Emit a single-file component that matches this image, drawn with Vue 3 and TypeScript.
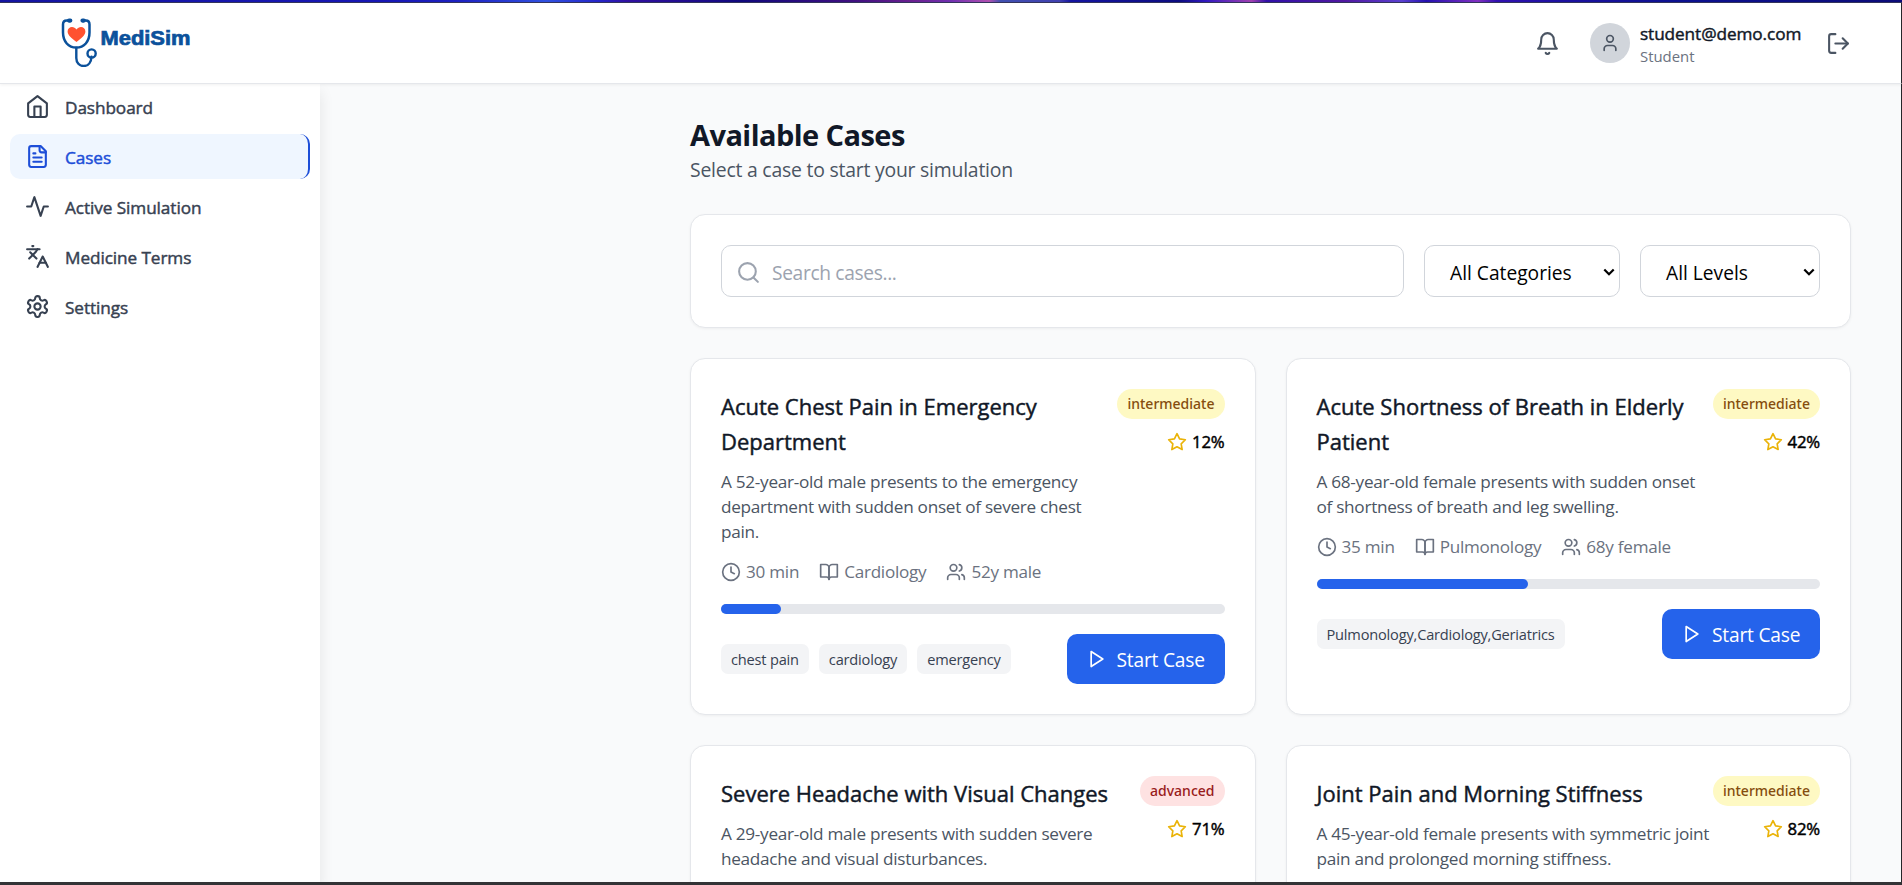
<script setup lang="ts">
type IconName =
  | 'home' | 'file' | 'activity' | 'languages' | 'settings' | 'bell' | 'user' | 'logout'
  | 'search' | 'star' | 'clock' | 'book' | 'users' | 'play'

interface NavItem { label: string; icon: IconName; active?: boolean }
interface CaseItem {
  title: string[]
  description: string[]
  level: 'intermediate' | 'advanced'
  score: number
  meta?: { icon: IconName; text: string }[]
  tags?: string[]
}

const icons: Record<IconName, string[]> = {
  home: ['m3 9 9-7 9 7v11a2 2 0 0 1-2 2H5a2 2 0 0 1-2-2z', 'M9 22V12h6v10'],
  file: ['M15 2H6a2 2 0 0 0-2 2v16a2 2 0 0 0 2 2h12a2 2 0 0 0 2-2V7Z', 'M14 2v4a2 2 0 0 0 2 2h4', 'M10 9H8', 'M16 13H8', 'M16 17H8'],
  activity: ['M22 12h-4l-3 9L9 3l-3 9H2'],
  languages: ['m5 8 6 6', 'm4 14 6-6 2-3', 'M2 5h12', 'M7 2h1', 'm22 22-5-10-5 10', 'M14 18h6'],
  settings: [
    'M12.22 2h-.44a2 2 0 0 0-2 2v.18a2 2 0 0 1-1 1.73l-.43.25a2 2 0 0 1-2 0l-.15-.08a2 2 0 0 0-2.73.73l-.22.38a2 2 0 0 0 .73 2.73l.15.1a2 2 0 0 1 1 1.72v.51a2 2 0 0 1-1 1.74l-.15.09a2 2 0 0 0-.73 2.73l.22.38a2 2 0 0 0 2.73.73l.15-.08a2 2 0 0 1 2 0l.43.25a2 2 0 0 1 1 1.73V20a2 2 0 0 0 2 2h.44a2 2 0 0 0 2-2v-.18a2 2 0 0 1 1-1.73l.43-.25a2 2 0 0 1 2 0l.15.08a2 2 0 0 0 2.73-.73l.22-.39a2 2 0 0 0-.73-2.73l-.15-.08a2 2 0 0 1-1-1.74v-.5a2 2 0 0 1 1-1.74l.15-.09a2 2 0 0 0 .73-2.73l-.22-.38a2 2 0 0 0-2.73-.73l-.15.08a2 2 0 0 1-2 0l-.43-.25a2 2 0 0 1-1-1.73V4a2 2 0 0 0-2-2z',
    'M15 12a3 3 0 1 1-6 0 3 3 0 0 1 6 0z',
  ],
  bell: ['M6 8a6 6 0 0 1 12 0c0 7 3 9 3 9H3s3-2 3-9', 'M10.3 21a1.94 1.94 0 0 0 3.4 0'],
  user: ['M19 21v-2a4 4 0 0 0-4-4H9a4 4 0 0 0-4 4v2', 'M16 7a4 4 0 1 1-8 0 4 4 0 0 1 8 0z'],
  logout: ['M9 21H5a2 2 0 0 1-2-2V5a2 2 0 0 1 2-2h4', 'm16 17 5-5-5-5', 'M21 12H9'],
  search: ['M19 11a8 8 0 1 1-16 0 8 8 0 0 1 16 0z', 'm21 21-4.3-4.3'],
  star: ['m12 2 3.09 6.26L22 9.27l-5 4.87 1.18 6.88L12 17.77l-6.18 3.25L7 14.14 2 9.27l6.91-1.01z'],
  clock: ['M22 12a10 10 0 1 1-20 0 10 10 0 0 1 20 0z', 'M12 6v6l4 2'],
  book: ['M2 3h6a4 4 0 0 1 4 4v14a3 3 0 0 0-3-3H2z', 'M22 3h-6a4 4 0 0 0-4 4v14a3 3 0 0 1 3-3h7z'],
  users: ['M16 21v-2a4 4 0 0 0-4-4H6a4 4 0 0 0-4 4v2', 'M13 7a4 4 0 1 1-8 0 4 4 0 0 1 8 0z', 'M22 21v-2a4 4 0 0 0-3-3.87', 'M16 3.13a4 4 0 0 1 0 7.75'],
  play: ['m5 3 14 9-14 9z'],
}

const nav: NavItem[] = [
  { label: 'Dashboard', icon: 'home' },
  { label: 'Cases', icon: 'file', active: true },
  { label: 'Active Simulation', icon: 'activity' },
  { label: 'Medicine Terms', icon: 'languages' },
  { label: 'Settings', icon: 'settings' },
]

const cases: CaseItem[] = [
  {
    title: ['Acute Chest Pain in Emergency', 'Department'],
    description: ['A 52-year-old male presents to the emergency', 'department with sudden onset of severe chest', 'pain.'],
    level: 'intermediate',
    score: 12,
    meta: [
      { icon: 'clock', text: '30 min' },
      { icon: 'book', text: 'Cardiology' },
      { icon: 'users', text: '52y male' },
    ],
    tags: ['chest pain', 'cardiology', 'emergency'],
  },
  {
    title: ['Acute Shortness of Breath in Elderly', 'Patient'],
    description: ['A 68-year-old female presents with sudden onset', 'of shortness of breath and leg swelling.'],
    level: 'intermediate',
    score: 42,
    meta: [
      { icon: 'clock', text: '35 min' },
      { icon: 'book', text: 'Pulmonology' },
      { icon: 'users', text: '68y female' },
    ],
    tags: ['Pulmonology,Cardiology,Geriatrics'],
  },
  {
    title: ['Severe Headache with Visual Changes'],
    description: ['A 29-year-old male presents with sudden severe', 'headache and visual disturbances.'],
    level: 'advanced',
    score: 71,
  },
  {
    title: ['Joint Pain and Morning Stiffness'],
    description: ['A 45-year-old female presents with symmetric joint', 'pain and prolonged morning stiffness.'],
    level: 'intermediate',
    score: 82,
  },
]
</script>

<template>
  <div class="screen">
    <div class="strip"></div>
    <header class="header">
      <svg class="logo" viewBox="0 0 162 50">
        <g fill="none" stroke="#0b519b" stroke-linecap="round" stroke-linejoin="round">
          <path d="M28.500 3.600h-1.800c-2.400 0-3.700 1.500-3.700 4v8c0 9 5.500 15 13.300 15s13.200-6 13.200-15v-8c0-2.500-1.300-4-3.700-4h-1.800" stroke-width="2.500" />
          <path d="M29 3.600h1.300M42.500 3.600h1.300" stroke-width="4.200" />
          <path d="M36.300 31v10c0 4.500 3 8 7.300 8 5 0 7.700-4.200 7.900-9.300" stroke-width="2.400" />
          <circle cx="51.600" cy="36.500" r="4.100" stroke-width="2.400" />
        </g>
        <path d="M36.500 25c-4.200-3.300-8.900-6.500-8.900-10.500 0-5.300 6.500-6 8.900-2 2.400-4 8.900-3.300 8.900 2 0 4-4.700 7.200-8.900 10.500z" fill="#ff5230" />
        <text x="60.500" y="28.300" textLength="90" lengthAdjust="spacingAndGlyphs">MediSim</text>
      </svg>
      <div class="account">
        <button class="icon-button">
          <svg class="icon" viewBox="0 0 24 24"><path v-for="d in icons.bell" :key="d" :d="d" /></svg>
        </button>
        <div class="profile">
          <div class="avatar">
            <svg class="icon small" viewBox="0 0 24 24"><path v-for="d in icons.user" :key="d" :d="d" /></svg>
          </div>
          <div class="who">
            <div class="email">student@demo.com</div>
            <div class="role">Student</div>
          </div>
        </div>
        <button class="icon-button">
          <svg class="icon" viewBox="0 0 24 24"><path v-for="d in icons.logout" :key="d" :d="d" /></svg>
        </button>
      </div>
    </header>

    <div class="body">
      <nav class="sidebar">
        <a v-for="item in nav" :key="item.label" class="nav-item" :class="{ active: item.active }">
          <svg class="icon" viewBox="0 0 24 24"><path v-for="d in icons[item.icon]" :key="d" :d="d" /></svg>
          <span>{{ item.label }}</span>
        </a>
      </nav>

      <main class="main">
        <h1>Available Cases</h1>
        <p class="subtitle">Select a case to start your simulation</p>

        <section class="panel filters">
          <div class="search">
            <svg class="icon" viewBox="0 0 24 24"><path v-for="d in icons.search" :key="d" :d="d" /></svg>
            <span>Search cases...</span>
          </div>
          <div class="select categories">
            <span>All Categories</span>
            <svg class="chevron" viewBox="0 0 12 8"><path d="m1.300 1.500 4.700 4.700 4.700-4.700" /></svg>
          </div>
          <div class="select levels">
            <span>All Levels</span>
            <svg class="chevron" viewBox="0 0 12 8"><path d="m1.300 1.500 4.700 4.700 4.700-4.700" /></svg>
          </div>
        </section>

        <section class="grid">
          <article v-for="c in cases" :key="c.title[0]" class="panel case">
            <div class="case-top">
              <div class="case-info">
                <h3><span v-for="line in c.title" :key="line">{{ line }}</span></h3>
                <p><span v-for="line in c.description" :key="line">{{ line }}</span></p>
                <div v-if="c.meta" class="meta">
                  <div v-for="m in c.meta" :key="m.text">
                    <svg class="icon small" viewBox="0 0 24 24"><path v-for="d in icons[m.icon]" :key="d" :d="d" /></svg>
                    <span>{{ m.text }}</span>
                  </div>
                </div>
              </div>
              <div class="case-side">
                <span class="badge" :class="c.level">{{ c.level }}</span>
                <div class="score">
                  <svg class="icon small star" viewBox="0 0 24 24"><path v-for="d in icons.star" :key="d" :d="d" /></svg>
                  <span>{{ c.score }}%</span>
                </div>
              </div>
            </div>
            <template v-if="c.tags">
              <div class="track"><div class="fill" :style="{ width: c.score + '%' }"></div></div>
              <div class="case-bottom">
                <div class="tags"><span v-for="t in c.tags" :key="t">{{ t }}</span></div>
                <button class="start">
                  <svg class="icon small" viewBox="0 0 24 24"><path v-for="d in icons.play" :key="d" :d="d" /></svg>
                  <span>Start Case</span>
                </button>
              </div>
            </template>
          </article>
        </section>
      </main>
    </div>
    <div class="bottom-edge"></div>
  </div>
</template>

<style>
body {
  margin: 0;
  overflow: hidden;
}
</style>

<style scoped>
.screen {
  width: 1902px;
  height: 885px;
  box-sizing: border-box;
  display: flex;
  flex-direction: column;
  overflow: hidden;
  background: #f9fafb;
  color: #111827;
  font-family: 'Segoe UI', 'Open Sans', 'Noto Sans', sans-serif;
}
.screen *,
.screen *::before {
  box-sizing: border-box;
}
.strip {
  flex: none;
  height: 3px;
  border-bottom: 1px solid #35355c;
  background: linear-gradient(90deg, #1414a0 0%, #1616b4 20%, #1c20c0 24%, #3050e0 28.700%, #2424c8 31.500%, #3010a0 33%, #10087c 39%, #401080 45%, #6a2090 48%, #7030b0 50%, #b050b0 52%, #4050b0 52.600%, #4040b0 55.700%, #1414a0 56.300%, #0c0c80 62%, #3018c0 63.400%, #a040b0 65.800%, #3010a8 66.600%, #5018a0 70.700%, #5a40d0 73.700%, #2410b0 75%, #8030c0 77.700%, #3010b0 78.700%, #1c10a0 82%, #0c1090 88%, #0c0c78 100%);
}
.header {
  flex: none;
  position: relative;
  z-index: 2;
  display: flex;
  justify-content: space-between;
  align-items: flex-start;
  height: 81px;
  padding: 14px 40px 0;
  background: #fff;
  border-bottom: 1px solid #e5e7eb;
  border-right: 1px solid #26262a;
  box-shadow: 0 1px 3px rgba(0, 0, 0, 0.06);
}
.logo {
  width: 162px;
  height: 50px;
}
.logo text {
  font: bold 19.500px 'Liberation Sans', Arial, sans-serif;
  fill: #0b519b;
  stroke: #0b519b;
  stroke-width: 0.7px;
}
.account {
  display: flex;
  align-items: center;
  height: 50px;
  margin-top: 1px;
}
button {
  border: 0;
  margin: 0;
  font-family: inherit;
}
.icon {
  flex: none;
  display: block;
  width: 25px;
  height: 25px;
  fill: none;
  stroke: currentColor;
  stroke-width: 2;
  stroke-linecap: round;
  stroke-linejoin: round;
}
.icon.small {
  width: 20px;
  height: 20px;
}
.icon-button {
  padding: 10px;
  background: none;
  color: #4b5563;
}
.profile {
  display: flex;
  align-items: center;
  gap: 10px;
  margin: 0 15px 0 20px;
}
.avatar {
  display: flex;
  align-items: center;
  justify-content: center;
  width: 40px;
  height: 40px;
  border-radius: 50%;
  background: #d1d5db;
  color: #4b5563;
}
.who {
  width: 161px;
  white-space: nowrap;
}
.email,
.nav-item span,
h3,
.score span {
  -webkit-text-stroke: 0.45px currentColor;
}
.email {
  font-size: 17.200px;
  letter-spacing: -0.08px;
  line-height: 26px;
}
.role {
  font-size: 14.900px;
  line-height: 19px;
  color: #6b7280;
}
.body {
  flex: 1;
  min-height: 0;
  display: flex;
  border-right: 1px solid #26262a;
}
.sidebar {
  flex: none;
  display: flex;
  flex-direction: column;
  gap: 5px;
  width: 320px;
  padding: 0 10px;
  background: #fff;
  box-shadow: 0 8px 14px rgba(0, 0, 0, 0.09);
}
.nav-item {
  display: flex;
  align-items: center;
  gap: 15px;
  height: 45px;
  padding: 0 15px;
  border-radius: 10px;
  color: #374151;
  font-size: 17.200px;
  letter-spacing: -0.08px;
}
.nav-item span {
  padding-top: 2px;
}
.nav-item.active {
  background: #eff6ff;
  color: #1d4ed8;
  border-right: 2px solid #1d4ed8;
}
.main {
  flex: 1;
  min-width: 0;
  padding: 31px 50px 0 370px;
}
h1 {
  margin: 0;
  font-size: 29px;
  letter-spacing: -0.55px;
  line-height: 40px;
  font-weight: 700;
  white-space: nowrap;
}
.subtitle {
  margin: 0;
  font-size: 19.400px;
  letter-spacing: -0.22px;
  line-height: 30px;
  color: #4b5563;
}
.panel {
  background: #fff;
  border: 1px solid #e5e7eb;
  border-radius: 15px;
  box-shadow: 0 1px 3px rgba(0, 0, 0, 0.05);
  padding: 30px;
}
.filters {
  display: flex;
  gap: 20px;
  height: 114px;
  margin-top: 29px;
  font-size: 19.200px;
}
.search,
.select {
  display: flex;
  align-items: center;
  height: 52px;
  border: 1px solid #d1d5db;
  border-radius: 10px;
  background: #fff;
  white-space: nowrap;
}
.search {
  flex: 1;
  gap: 11px;
  padding: 2px 14px 0;
  color: #9ca3af;
  letter-spacing: -0.35px;
}
.select {
  justify-content: space-between;
  padding: 1px 4px 0 25px;
  color: #000;
}
.select span {
  padding-top: 2px;
}
.categories {
  width: 196px;
}
.levels {
  width: 180px;
}
.chevron {
  width: 12px;
  height: 8px;
  fill: none;
  stroke: #000;
  stroke-width: 2.200;
}
.grid {
  display: grid;
  grid-template-columns: 1fr 1fr;
  gap: 30px;
  margin-top: 30px;
  grid-template-rows: 357px 357px;
}
.case-top {
  display: flex;
  justify-content: space-between;
  white-space: nowrap;
}
.case-info {
  min-width: 0;
}
.case-info h3 span,
.case-info p span {
  display: block;
}
h3 {
  margin: 0 0 10px;
  font-size: 22px;
  line-height: 35px;
  font-weight: 400;
}
p {
  margin: 0;
}
.case-info p {
  font-size: 17.200px;
  letter-spacing: -0.29px;
  line-height: 25px;
  color: #4b5563;
}
.meta {
  display: flex;
  gap: 20px;
  margin-top: 15px;
  font-size: 17.100px;
  letter-spacing: -0.25px;
  line-height: 25px;
  color: #6b7280;
}
.meta > div {
  display: flex;
  align-items: center;
  gap: 5px;
}
.case-side {
  display: flex;
  flex-direction: column;
  align-items: flex-end;
  gap: 10px;
}
.badge {
  height: 30px;
  padding: 0 10px;
  border-radius: 15px;
  font-family: 'Segoe UI', 'Noto Sans', sans-serif;
  font-size: 14px;
  font-weight: 500;
  line-height: 30px;
}
.intermediate {
  background: #fef9c3;
  color: #854d0e;
}
.advanced {
  background: #fee2e2;
  color: #991b1b;
}
.score {
  display: flex;
  align-items: center;
  gap: 5px;
  font-size: 16.800px;
  letter-spacing: -0.2px;
  line-height: 25px;
  color: #000;
}
.star {
  color: #eab308;
}
.track {
  height: 10px;
  margin: 20px 0;
  border-radius: 5px;
  background: #e5e7eb;
}
.fill {
  height: 10px;
  border-radius: 5px;
  background: #2563eb;
}
.case-bottom {
  display: flex;
  align-items: center;
  justify-content: space-between;
}
.tags {
  display: flex;
  gap: 10px;
}
.tags span {
  height: 30px;
  padding: 0 10px;
  border-radius: 7px;
  background: #f3f4f6;
  color: #374151;
  font-size: 14.600px;
  letter-spacing: -0.19px;
  line-height: 30px;
}
.start {
  display: flex;
  align-items: center;
  gap: 10px;
  width: 158px;
  height: 50px;
  padding: 0 20px;
  border-radius: 10px;
  background: #2563eb;
  color: #fff;
  font-size: 19.200px;
  letter-spacing: -0.2px;
  white-space: nowrap;
}
.start span {
  padding-top: 1px;
}
.bottom-edge {
  flex: none;
  position: relative;
  z-index: 2;
  height: 3px;
  background: #333336;
}
</style>
